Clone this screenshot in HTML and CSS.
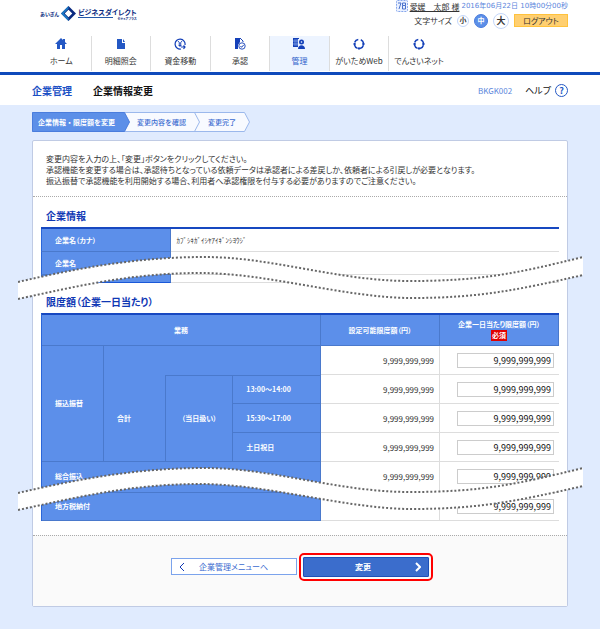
FILE: index.html
```
<!DOCTYPE html>
<html lang="ja">
<head>
<meta charset="utf-8">
    <title>企業情報変更</title>
    <link rel="stylesheet" href="styles.css">
</head>
<body>
    <header class="header">
        <div class="logo">
            <span class="logo-bank">あいぎん</span>
            <svg class="logo-mark" viewBox="0 0 16 16"><path d="M8 0l8 8-8 8-8-8z" fill="#0a2a80"/><path d="M0 8l8-8v4L4 8l4 4v4z" fill="#1c78c4"/><path d="M3 8l5-5 5 5-5 5z" fill="#0a2a80"/><path d="M8 4l4 4-4 4-4-4z" fill="#fff"/></svg>
            <span class="logo-name">ビジネスダイレクト<small>セキュアプラス</small></span>
        </div>
        <div class="user">
            <div class="user-line">
                <svg class="user-icon" viewBox="0 0 12 12"><rect x=".5" y=".5" width="11" height="11" rx="1" fill="#eaf1ff" stroke="#86a6ec" stroke-dasharray="2 1"/><path d="M2 3h3L3 9M6.500 3h3v2.500h-3zM6.500 5.500v3.500h3V5.500" fill="none" stroke="#4a72cc"/></svg>
                <a href="#" class="user-name">愛媛　太郎 様</a>
                <span class="date">2016年06月22日 10時00分00秒</span>
            </div>
            <div class="tools">
                <span>文字サイズ</span>
                <button type="button" class="size">小</button>
                <button type="button" class="size size-on">中</button>
                <button type="button" class="size size-large">大</button>
                <button type="button" class="logout">ログアウト</button>
            </div>
        </div>
    </header>
    <nav class="nav">
        <a href="#"><svg viewBox="0 0 12 12"><path d="M6 0L0 6h2v5h3V7h2v4h3V6h2l-2-2V1H8v1z" fill="#2458c4"/></svg>ホーム</a>
        <a href="#"><svg viewBox="0 0 12 12"><path d="M2 1h5v4h3v6H2z" fill="#2458c4"/><path d="M8 1l2 3H8z" fill="#2458c4"/></svg>明細照会</a>
        <a href="#"><svg viewBox="0 0 12 12"><path d="M7 11a5 5 0 1 1 4-4" fill="none" stroke="#1440b8" stroke-width="1.2"/><path d="M4 3l2 2.500L8 3M6 5.500V9M4.500 6h3M4.500 7.500h3" fill="none" stroke="#1440b8" stroke-width=".9"/><path d="M7 9h4M9.500 7.500L11 9l-1.500 2" fill="none" stroke="#1440b8" stroke-width="1.200"/></svg>資金移動</a>
        <a href="#"><svg viewBox="0 0 12 12"><path d="M1 0h5v4L4 7v4H1z" fill="#1440b8"/><path d="M6 0l3 3v1" fill="none" stroke="#1440b8"/><circle cx="8" cy="8" r="3.200" fill="#fff" stroke="#1440b8" stroke-width=".9"/><path d="M6.500 8l1 1.300L9.800 6.800" fill="none" stroke="#1440b8"/></svg>承認</a>
        <a href="#" class="nav-on"><svg viewBox="0 0 12 12"><path d="M0 0h6v9H0z" fill="#1440b8"/><path d="M2 1v7M4 1v7M0 3h6M0 6h6" stroke="#9bb8f4" stroke-width=".6"/><rect x="5" y="1" width="7" height="11" fill="#eaf1ff"/><circle cx="8.500" cy="4" r="2.500" fill="#1440b8"/><circle cx="8.500" cy="4" r=".8" fill="#fff"/><path d="M5 11c0-5 7-5 7 0z" fill="#1440b8"/></svg>管理</a>
        <a href="#"><svg viewBox="0 0 12 12"><circle cx="6" cy="6" r="4.600" fill="none" stroke="#1440b8" stroke-width="1.500" stroke-dasharray="4.600 2.630" stroke-dashoffset="-1.300"/><g fill="#1440b8"><circle cx="1.600" cy="6" r="1.200"/><circle cx="6" cy="10.400" r="1.200"/><circle cx="10.400" cy="6" r="1.200"/></g></svg>がいためWeb</a>
        <a href="#"><svg viewBox="0 0 12 12"><circle cx="6" cy="6" r="4.600" fill="none" stroke="#1440b8" stroke-width="1.500" stroke-dasharray="4.600 2.630" stroke-dashoffset="-1.300"/><g fill="#1440b8"><circle cx="1.600" cy="6" r="1.200"/><circle cx="6" cy="10.400" r="1.200"/><circle cx="10.400" cy="6" r="1.200"/></g></svg>でんさいネット</a>
    </nav>
    <div class="titlebar">
        <span class="category">企業管理</span>
        <h1>企業情報変更</h1>
        <span class="code">BKGK002</span>
        <a href="#" class="help">ヘルプ<span class="help-mark">?</span></a>
    </div>
    <main>
        <div class="steps">
            <svg viewBox="0 0 218 20" preserveAspectRatio="none"><path d="M.5.500h212l5 9.500-5 9.500H.5z" fill="#f8faff" stroke="#9bb8ec"/><path d="M162.500.500l5 9.500-5 9.500" fill="none" stroke="#9bb8ec"/><path d="M.5.500h92l5 9.500-5 9.500H.5z" fill="#5c8fe8" stroke="#4a7ddd"/></svg>
            <span class="step-on">企業情報・限度額を変更</span>
            <span>変更内容を確認</span>
            <span>変更完了</span>
        </div>
        <form class="panel">
            <p class="lead">変更内容を入力の上、「変更」ボタンをクリックしてください。<br>
            承認機能を変更する場合は、承認待ちとなっている依頼データは承認者による差戻しか、依頼者による引戻しが必要となります。<br>
            振込振替で承認機能を利用開始する場合、利用者へ承認権限を付与する必要がありますのでご注意ください。</p>
            <section class="block">
                <h2>企業情報</h2>
                <div class="cut">
                    <table class="info">
                        <colgroup><col class="c-name"><col></colgroup>
                        <tr><th scope="row">企業名（カナ）</th><td>ｶﾌﾞｼｷｶﾞｲｼﾔｱｲｷﾞﾝｼﾖｳｼﾞ</td></tr>
                        <tr><th scope="row">企業名</th><td></td></tr>
                        <tr class="rest"><th></th><td></td></tr>
                    </table>
                    <svg class="wave wave-info" viewBox="0 0 565 44" preserveAspectRatio="none"><path d="M0 26C60 12 120 1 187 1S320 25 392 25S500 17 565 1V19C500 34 460 42 394 42S250 17 182 17S60 30 0 43z" fill="#fff"/><path class="dots" d="M0 26C60 12 120 1 187 1S320 25 392 25S500 17 565 1M0 43C60 30 114 17 182 17S328 42 394 42S500 34 565 19"/></svg>
                </div>
            </section>
            <section class="block">
                <h2>限度額（企業一日当たり）</h2>
                <div class="cut">
                    <table class="limits">
                        <colgroup><col class="c1"><col class="c1"><col class="c2"><col class="c3"><col class="c4"><col class="c4"></colgroup>
                        <thead>
                            <tr><th colspan="4">業務</th><th>設定可能限度額（円）</th><th>企業一日当たり限度額（円）<br><span class="must">必須</span></th></tr>
                        </thead>
                        <tbody>
                            <tr><th rowspan="4">振込振替</th><th colspan="3" class="open"></th><td>9,999,999,999</td><td><input type="text" aria-label="振込振替 合計" value="9,999,999,999"></td></tr>
                            <tr><th rowspan="3" class="total">合計</th><th rowspan="3" class="same-day">（当日扱い）</th><th class="time time-first">13:00～14:00</th><td>9,999,999,999</td><td><input type="text" aria-label="13:00～14:00" value="9,999,999,999"></td></tr>
                            <tr><th class="time">15:30～17:00</th><td>9,999,999,999</td><td><input type="text" aria-label="15:30～17:00" value="9,999,999,999"></td></tr>
                            <tr><th class="time">土日祝日</th><td>9,999,999,999</td><td><input type="text" aria-label="土日祝日" value="9,999,999,999"></td></tr>
                            <tr class="tall"><th colspan="4">総合振込</th><td>9,999,999,999</td><td><input type="text" aria-label="総合振込" value="9,999,999,999"></td></tr>
                            <tr class="last"><th colspan="4">地方税納付</th><td></td><td><input type="text" aria-label="地方税納付" value="9,999,999,999"></td></tr>
                        </tbody>
                    </table>
                    <svg class="wave wave-limits" viewBox="0 0 565 44" preserveAspectRatio="none"><path d="M0 26C60 12 120 1 187 1S320 25 392 25S500 17 565 1V19C500 34 460 42 394 42S250 17 182 17S60 30 0 43z" fill="#fff"/><path class="dots" d="M0 26C60 12 120 1 187 1S320 25 392 25S500 17 565 1M0 43C60 30 114 17 182 17S328 42 394 42S500 34 565 19"/></svg>
                </div>
            </section>
            <div class="actions">
                <button type="button" class="back"><svg viewBox="0 0 6 10"><path d="M5 1L1 5l4 4"/></svg><span>企業管理メニューへ</span></button>
                <button type="submit" class="submit"><span>変更</span><svg viewBox="0 0 6 10"><path d="M1 1l4 4-4 4"/></svg></button>
            </div>
        </form>
    </main>
</body>
</html>
```
FILE: styles.css
```
*{box-sizing:border-box;}
body{margin:0;min-height:100vh;background:#e0ebfe;color:#333;font-family:"Noto Sans CJK JP",sans-serif;font-size:8px;line-height:11px;font-feature-settings:"palt";}
button,input{margin:0;padding:0;font:inherit;font-feature-settings:inherit;color:inherit;}
a{color:inherit;text-decoration:none;}
h1,h2,p{margin:0;}

.header{display:flex;justify-content:space-between;align-items:flex-start;height:36px;padding:0 32px 0 40px;background:#fff;}
.logo{display:flex;align-items:center;gap:2px;padding-top:6px;color:#0a2a80;font-weight:bold;}
.logo-bank{font-size:5px;}
.logo-mark{width:15px;height:15px;}
.logo-name{display:flex;flex-direction:column;font-size:7px;line-height:10px;}
.logo-name small{font-size:3px;line-height:4px;text-align:right;background:linear-gradient(#2458a8,#2458a8) no-repeat left top/60% 1px;}
.user{display:flex;flex-direction:column;align-items:flex-end;}
.user-line{display:flex;align-items:center;gap:2px;height:12px;white-space:nowrap;}
.user-icon{width:12px;height:12px;}
.user-name{text-decoration:underline;}
.date{color:#5b86dc;font-family:"DejaVu Sans","Noto Sans CJK JP",sans-serif;font-size:7px;}
.tools{display:flex;align-items:center;gap:5px;height:17px;}
.size{width:12px;height:12px;border:1px solid #c4d7fa;border-radius:50%;background:#fff;font-size:7px;font-weight:bold;line-height:9px;}
.size-on{width:14px;height:14px;border-color:#4a7ddd;background:#5c8fe8;color:#fff;}
.size-large{width:16px;height:16px;font-size:9px;}
.logout{width:54px;height:13px;border:1px solid #ffc23c;background:#ffcf70;}

.nav{display:grid;grid-template-columns:repeat(9,1fr);height:39px;padding:0 32px;background:#fff;border-bottom:3px solid #0f4abb;}
.nav a{display:flex;flex-direction:column;align-items:center;gap:5px;height:35px;padding-top:2px;border-right:1px solid #ddd;white-space:nowrap;}
.nav a:last-child{border-right:0;}
.nav svg{width:12px;height:12px;}
.nav .nav-on{background:#edf4ff;color:#2f62cc;}

.titlebar{display:flex;align-items:center;height:30px;padding:0 32px;background:#fff;}
.category{margin-right:21px;color:#1a4fc4;font-size:10px;font-weight:bold;}
h1{flex:1;color:#111;font-size:10px;}
.code{margin-right:13px;color:#5b86dc;}
.help{display:flex;align-items:center;gap:4px;color:#111;font-size:9px;}
.help-mark{width:13px;height:13px;border:1px solid #2458c4;border-radius:50%;color:#2458c4;font-size:9px;font-weight:bold;line-height:11px;text-align:center;}

main{padding:7px 32px 21px;}
.steps{position:relative;display:grid;grid-template-columns:99px 71px 48px;width:218px;height:20px;margin-bottom:8px;color:#3b6bd0;font-size:7px;line-height:20px;white-space:nowrap;font-feature-settings:normal;}
.steps svg{position:absolute;width:100%;height:100%;}
.steps span{position:relative;padding-left:6px;font-weight:500;}
.steps .step-on{color:#fff;font-weight:bold;}

.panel{background:#fff;border:1px solid #c0cbe4;border-radius:2px;}
.lead{padding:12px 13px 10px;border-bottom:1px dotted #aaa;}
.block{padding:12px 8px 0;}
h2{margin-bottom:5px;padding-left:5px;color:#1038b4;font-size:10px;line-height:13px;}
.cut{position:relative;}
table{width:100%;table-layout:fixed;border-collapse:separate;border-spacing:0;border-top:2px solid #1748c0;}
th,td{padding:0;font-size:7px;line-height:11px;}
th{background:#5c8fea;color:#fff;border-right:1px solid #4a79cc;border-bottom:1px solid #4a79cc;}
td{border-bottom:1px solid #ddd;}
.info th{height:23px;padding-left:13px;text-align:left;border-left:1px solid #2b66d8;}
.info td{padding-left:6px;}
.info .rest th{height:8px;border-bottom-color:#1a58d8;}
.c-name{width:25%;}
.c1{width:12%;}
.c2{width:13%;}
.c3{width:17%;}
.c4{width:23%;}
.limits{border-left:1px solid #2b66d8;}
.limits thead th{height:31px;}
.limits tbody th,.limits tbody td{height:29px;}
.limits tbody th[rowspan="4"],.limits tbody th[colspan="4"],.limits .total,.limits .time{padding-left:13px;text-align:left;}
.limits .open{border-bottom:0;}
.limits .same-day,.limits .time-first{border-top:1px solid #4a79cc;}
.limits td{padding-right:5px;font-size:8px;text-align:right;border-right:1px solid #ddd;}
.limits td:last-child{border-right:0;}
.limits input{width:97px;max-width:90%;height:15px;padding-right:2px;border:1px solid #ccc;background:#fff;color:#111;font-size:9px;text-align:right;}
.limits .tall td,.limits .tall th{height:31px;padding-bottom:2px;}
.limits .last td,.limits .last th{height:28px;}
.must{display:inline-block;padding:0 1px;background:#e00000;line-height:11px;}
.wave{position:absolute;left:-23px;width:calc(100% + 47px);height:44px;}
.wave-info{top:29px;}
.wave-limits{top:154px;}
.dots{fill:none;stroke:#666;stroke-width:2;stroke-dasharray:2 2;}

.actions{display:flex;justify-content:center;align-items:center;gap:6px;height:71px;margin-top:14px;padding-bottom:9px;background:#fafafa;border-top:1px dotted #aaa;}
.actions button{display:flex;align-items:center;width:126px;padding:0 7px;}
.actions span{flex:1;text-align:center;}
.actions svg{width:6px;height:10px;fill:none;stroke:#1038b4;stroke-width:1;}
.back{height:17px;border:1px solid #7ba3ec;background:#fff;color:#3b6bd0;}
.actions .back span{padding-right:7px;}
.submit{height:20px;border:1px solid #1c50b8;background:#3b6dcc;color:#fff;font-weight:bold;outline:2px solid #f00;outline-offset:2px;border-radius:1px;}
.actions .submit svg{stroke:#fff;stroke-width:2;}
```
